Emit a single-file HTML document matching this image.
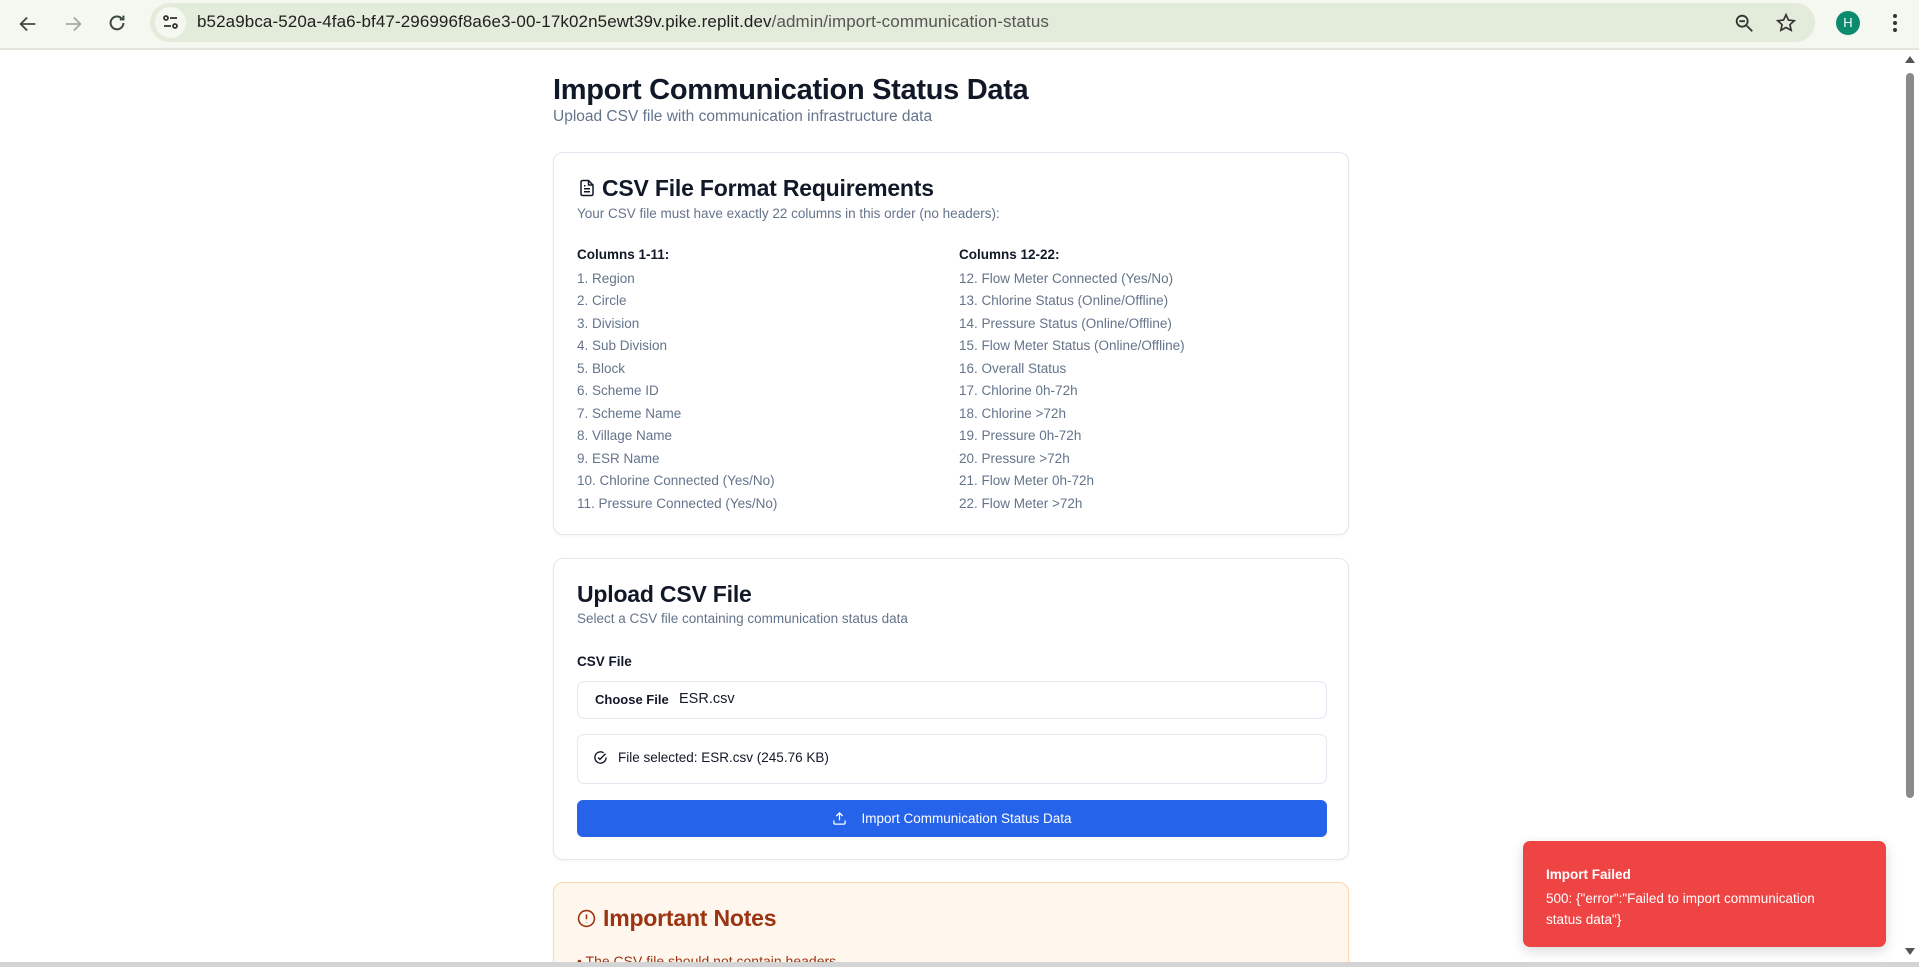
<!DOCTYPE html>
<html style="width:1919px;height:967px;overflow:hidden"><head><meta charset="utf-8"><style>
*{box-sizing:border-box;margin:0;padding:0}
body{width:1919px;height:967px;overflow:hidden;background:#fff;font-family:"Liberation Sans",sans-serif;position:relative}
.bar{position:absolute;left:0;top:0;width:1919px;height:50px;background:#f5f8f0;border-bottom:2px solid #e2e6dc}
.url{position:absolute;left:150px;top:3px;width:1665px;height:39px;border-radius:20px;background:#e3ebdb}
.url .t{position:absolute;left:47px;top:9px;font-size:17px;color:#1f1f1f;letter-spacing:.1px}
.url .t span{color:#555}
.tune{position:absolute;left:5px;top:4px;width:31px;height:31px;border-radius:50%;background:#f5f8f0}
.av{position:absolute;left:1836px;top:11px;width:24px;height:24px;border-radius:50%;background:#0b8a6e;color:#fff;font-size:13px;text-align:center;line-height:24px}
h1{position:absolute;left:553px;top:74px;font-size:29px;font-weight:bold;color:#111827;letter-spacing:-.3px}
.sub{position:absolute;left:553px;top:108px;font-size:15.5px;color:#64748b}
.card{position:absolute;left:553px;width:796px;border:1px solid #e2e8f0;border-radius:10px;background:#fff;box-shadow:0 1px 2px rgba(0,0,0,.05)}
.ct{position:absolute;left:23px;font-size:23px;font-weight:bold;color:#111827;letter-spacing:-.2px}
.cd{position:absolute;left:23px;font-size:13.5px;color:#64748b}
.col{position:absolute;font-size:13.5px;color:#64748b;line-height:22.5px}
.col b{color:#111827;font-weight:bold;display:block;margin-bottom:1px}
.box{position:absolute;left:23px;width:750px;border:1px solid #e2e8f0;border-radius:7px;font-size:13.5px;color:#111827}
.btn{position:absolute;left:23px;width:750px;height:37px;top:241px;background:#2563eb;border-radius:6px;color:#fff;font-size:13.5px;text-align:center;line-height:37px}
.toast{position:absolute;left:1523px;top:841px;width:363px;height:106px;background:#ef4444;border-radius:7px;color:#fff;font-size:13.5px;box-shadow:0 4px 12px rgba(0,0,0,.15)}
</style></head><body>
<div class="bar">
<svg style="position:absolute;left:17px;top:13px" width="22" height="22" viewBox="0 0 24 24" fill="none" stroke="#3c4a3e" stroke-width="2"><path d="M20 12H5M11 5l-7 7 7 7"/></svg>
<svg style="position:absolute;left:62px;top:13px" width="22" height="22" viewBox="0 0 24 24" fill="none" stroke="#a5aba3" stroke-width="2"><path d="M4 12h15M13 5l7 7-7 7"/></svg>
<svg style="position:absolute;left:106px;top:12px" width="22" height="22" viewBox="0 0 24 24" fill="none" stroke="#3c4a3e" stroke-width="2.2"><path d="M19 12a7 7 0 1 1-2-5M19 4v4h-4"/></svg>
<div class="url"><div class="tune"><svg style="position:absolute;left:7px;top:7px" width="17" height="17" viewBox="0 0 17 17" fill="none" stroke="#333" stroke-width="1.8"><circle cx="4" cy="4" r="2"/><path d="M8 4h7M2 12h7"/><circle cx="13" cy="12" r="2"/></svg></div>
<div class="t">b52a9bca-520a-4fa6-bf47-296996f8a6e3-00-17k02n5ewt39v.pike.replit.dev<span>/admin/import-communication-status</span></div>
<svg style="position:absolute;left:1583px;top:9px" width="22" height="22" viewBox="0 0 24 24" fill="none" stroke="#333" stroke-width="2"><circle cx="10" cy="10" r="6"/><path d="M15 15l6 6M7 10h6"/></svg>
<svg style="position:absolute;left:1625px;top:9px" width="22" height="22" viewBox="0 0 24 24" fill="none" stroke="#333" stroke-width="1.8"><path d="M12 3l2.7 5.8 6.3.7-4.7 4.3 1.3 6.2L12 16.9 6.4 20l1.3-6.2L3 9.5l6.3-.7z"/></svg>
</div>
<div class="av">H</div>
<div style="position:absolute;left:1893px;top:14px;width:4px;height:4px;border-radius:2px;background:#333;box-shadow:0 7px 0 #333,0 14px 0 #333"></div>
</div>

<h1>Import Communication Status Data</h1>
<div class="sub">Upload CSV file with communication infrastructure data</div>

<div class="card" style="top:152px;height:383px">
<svg style="position:absolute;left:24px;top:25px" width="18" height="20" viewBox="0 0 24 24" fill="none" stroke="#111827" stroke-width="2"><path d="M14 2H6a2 2 0 0 0-2 2v16a2 2 0 0 0 2 2h12a2 2 0 0 0 2-2V8z"/><path d="M14 2v6h6M8 13h8M8 17h8M8 9h2"/></svg>
<div class="ct" style="left:48px;top:22px">CSV File Format Requirements</div>
<div class="cd" style="top:53px">Your CSV file must have exactly 22 columns in this order (no headers):</div>
<div class="col" style="left:23px;top:91px"><b>Columns 1-11:</b>1. Region<br>2. Circle<br>3. Division<br>4. Sub Division<br>5. Block<br>6. Scheme ID<br>7. Scheme Name<br>8. Village Name<br>9. ESR Name<br>10. Chlorine Connected (Yes/No)<br>11. Pressure Connected (Yes/No)</div>
<div class="col" style="left:405px;top:91px"><b>Columns 12-22:</b>12. Flow Meter Connected (Yes/No)<br>13. Chlorine Status (Online/Offline)<br>14. Pressure Status (Online/Offline)<br>15. Flow Meter Status (Online/Offline)<br>16. Overall Status<br>17. Chlorine 0h-72h<br>18. Chlorine &gt;72h<br>19. Pressure 0h-72h<br>20. Pressure &gt;72h<br>21. Flow Meter 0h-72h<br>22. Flow Meter &gt;72h</div>
</div>

<div class="card" style="top:558px;height:302px">
<div class="ct" style="top:22px">Upload CSV File</div>
<div class="cd" style="top:52px">Select a CSV file containing communication status data</div>
<div style="position:absolute;left:23px;top:95px;font-size:13.5px;font-weight:bold;color:#111827">CSV File</div>
<div class="box" style="top:122px;height:38px"><span style="position:absolute;left:17px;top:10px;font-weight:bold;font-size:13px">Choose File</span><span style="position:absolute;left:101px;top:9px;font-size:14.5px">ESR.csv</span></div>
<div class="box" style="top:175px;height:50px"><svg style="position:absolute;left:15px;top:15px" width="15" height="15" viewBox="0 0 24 24" fill="none" stroke="#111827" stroke-width="2.2"><path d="M21 12a9 9 0 1 1-4-7.5"/><path d="M8 12l3 3 9-9"/></svg><span style="position:absolute;left:40px;top:15px">File selected: ESR.csv (245.76 KB)</span></div>
<div class="btn"><svg style="vertical-align:-3px;margin-right:14px" width="15" height="15" viewBox="0 0 24 24" fill="none" stroke="#fff" stroke-width="2"><path d="M21 15v4a2 2 0 0 1-2 2H5a2 2 0 0 1-2-2v-4M17 8l-5-5-5 5M12 3v12"/></svg>Import Communication Status Data</div>
</div>

<div class="card" style="top:882px;height:100px;background:#fff7ed;border-color:#fed7aa">
<svg style="position:absolute;left:23px;top:26px" width="19" height="19" viewBox="0 0 24 24" fill="none" stroke="#9a3412" stroke-width="2"><circle cx="12" cy="12" r="10"/><path d="M12 7v6M12 16.5v.5"/></svg>
<div class="ct" style="left:49px;top:22px;color:#9a3412">Important Notes</div>
<div style="position:absolute;left:23px;top:70px;font-size:14px;color:#9a3412">• The CSV file should not contain headers</div>
</div>

<div style="position:absolute;left:0;top:962px;width:1919px;height:5px;background:#d4d4d4"></div>
<div style="position:absolute;left:1901px;top:50px;width:18px;height:912px;background:#fff"></div>
<div style="position:absolute;left:1906px;top:73px;width:8px;height:725px;background:#8a8a8a;border-radius:4px"></div>
<div style="position:absolute;left:1905px;top:56px;width:0;height:0;border-left:5px solid transparent;border-right:5px solid transparent;border-bottom:7px solid #555"></div>
<div style="position:absolute;left:1905px;top:948px;width:0;height:0;border-left:5px solid transparent;border-right:5px solid transparent;border-top:7px solid #555"></div>

<div class="toast">
<div style="position:absolute;left:23px;top:26px;font-weight:bold">Import Failed</div>
<div style="position:absolute;left:23px;top:47px;line-height:21px;width:300px">500: {"error":"Failed to import communication status data"}</div>
</div>
</body></html>
